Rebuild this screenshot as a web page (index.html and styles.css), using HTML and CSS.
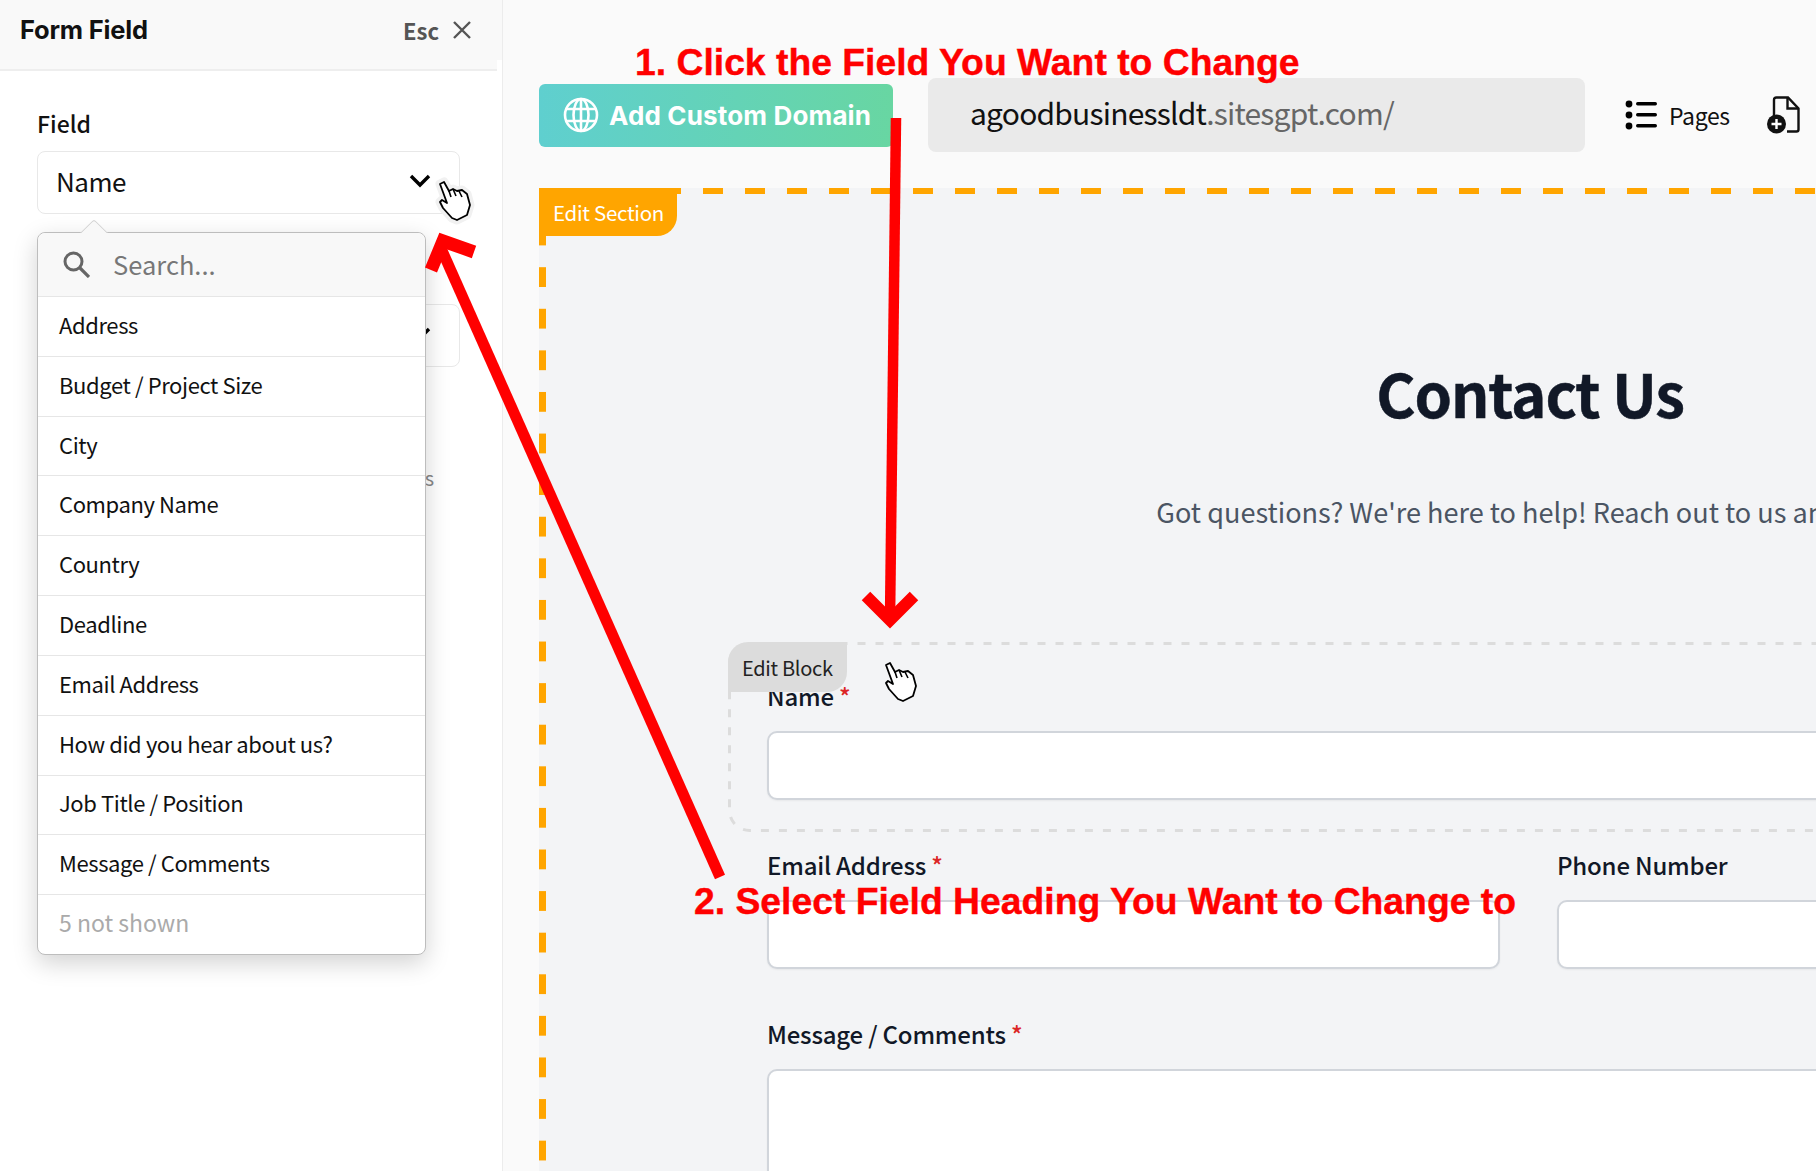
FILE: index.html
```html
<!doctype html>
<html lang="en">
  <head>
    <meta charset="UTF-8" />
    <title>Form Field</title>
    <link rel="stylesheet" href="styles.css">
  </head>
  <body>
    <aside class="c-panel">
      <header class="c-panel__header">
        <h2>Form Field</h2>
        <div class="c-panel__close">
          <span>Esc</span>
          <svg width="20" height="20" viewBox="0 0 20 20"><path d="M2 2 18 18M18 2 2 18" stroke="#555" stroke-width="2.4" fill="none"/></svg>
        </div>
      </header>

      <div class="c-panel__body">
        <label class="c-label">Field</label>
        <div class="c-select">
          <span>Name</span>
          <svg class="c-select__chevron" width="22" height="14" viewBox="0 0 22 14"><path d="M2 2 11 11 20 2" stroke="#000" stroke-width="3.4" fill="none"/></svg>
        </div>
        <div class="c-select c-select--second">
          <svg class="c-select__chevron" width="22" height="14" viewBox="0 0 22 14"><path d="M2 2 11 11 20 2" stroke="#000" stroke-width="3.4" fill="none"/></svg>
        </div>
        <p class="c-hint">Shown to visitors above the form fields</p>
      </div>

      <div class="c-menu">
        <div class="c-menu__search">
          <svg width="28" height="28" viewBox="0 0 28 28"><circle cx="11.5" cy="11.5" r="8.5" stroke="#666" stroke-width="3" fill="none"/><path d="M18 18 27 27" stroke="#666" stroke-width="3.2" fill="none"/></svg>
          <span>Search...</span>
        </div>
        <div class="c-menu__item">Address</div>
        <div class="c-menu__item">Budget / Project Size</div>
        <div class="c-menu__item">City</div>
        <div class="c-menu__item">Company Name</div>
        <div class="c-menu__item">Country</div>
        <div class="c-menu__item">Deadline</div>
        <div class="c-menu__item">Email Address</div>
        <div class="c-menu__item">How did you hear about us?</div>
        <div class="c-menu__item">Job Title / Position</div>
        <div class="c-menu__item">Message / Comments</div>
        <div class="c-menu__item c-menu__item--muted">5 not shown</div>
      </div>
    </aside>

    <main class="c-main">
      <div class="c-topbar">
        <a class="c-domain-btn">
          <svg width="36" height="36" viewBox="0 0 36 36" fill="none" stroke="#fff" stroke-width="2.6">
            <circle cx="18" cy="18" r="16"/>
            <ellipse cx="18" cy="18" rx="7.5" ry="16"/>
            <path d="M4 12H32M4 24H32M18 2V34"/>
          </svg>
          <span>Add Custom Domain</span>
        </a>
        <div class="c-url">agoodbusinessldt<span>.sitesgpt.com/</span></div>
        <div class="c-pages">
          <svg width="32" height="30" viewBox="0 0 32 30" fill="#000">
            <circle cx="4" cy="4" r="3.4"/><circle cx="4" cy="15" r="3.4"/><circle cx="4" cy="26" r="3.4"/>
            <rect x="11" y="2" width="21" height="3.4" rx="1.7"/><rect x="11" y="13" width="21" height="3.4" rx="1.7"/><rect x="11" y="24" width="21" height="3.4" rx="1.7"/>
          </svg>
          <span>Pages</span>
        </div>
        <svg class="c-add-page" width="33" height="38" viewBox="0 0 33 38">
          <path d="M7 20V4Q7 1.500 9.500 1.500H21L31.500 12.500V33.500Q31.500 35.500 29.500 35.500H20" fill="none" stroke="#111" stroke-width="2.4"/>
          <path d="M20.500 2V12.500H31" fill="none" stroke="#111" stroke-width="2.4"/>
          <circle cx="9.500" cy="28" r="9.500" fill="#111"/>
          <path d="M4.500 28H14.500M9.500 23V33" stroke="#fff" stroke-width="2.4"/>
        </svg>
      </div>

      <section class="c-section">
        <div class="c-section__tag">Edit Section</div>
        <h1>Contact Us</h1>
        <p class="c-section__intro">Got questions? We're here to help! Reach out to us anytime.</p>

        <div class="c-block">
          <svg class="c-block__outline" width="100%" height="100%"><rect x="1.500" y="1.500" width="1601" height="187" rx="20" fill="none" stroke="#dcdcdc" stroke-width="3" stroke-dasharray="8 10"/></svg>
          <div class="c-block__tag">Edit Block</div>
          <label class="c-field-label">Name <em>*</em></label>
          <div class="c-input"></div>
        </div>

        <div class="c-form-row">
          <div>
            <label class="c-field-label">Email Address <em>*</em></label>
            <div class="c-input"></div>
          </div>
          <div>
            <label class="c-field-label">Phone Number</label>
            <div class="c-input"></div>
          </div>
        </div>

        <div class="c-form-message">
          <label class="c-field-label">Message / Comments <em>*</em></label>
          <div class="c-input c-input--area"></div>
        </div>
      </section>
    </main>

    <!-- hand cursors and red markup sit on top of the page -->
    <svg class="c-markup" width="1816" height="1171" viewBox="0 0 1816 1171">
      <defs>
        <path id="hand-shape" d="M0 2 4 0 9 9 13 7 17 9 22 8 27 12 30 23 27 33 17 38 12 36 3 26 0 20 2 18 7 21Z"/>
        <g id="hand">
          <use href="#hand-shape" fill="#fff" stroke="#000" stroke-width="1.800" stroke-linejoin="round"/>
          <path d="M9 9 11 15M13 7 16 14M19 9 22 15" stroke="#000" stroke-width="1.600" fill="none"/>
        </g>
      </defs>
      <use href="#hand-shape" x="440" y="182" fill="#f1f1f1" stroke="#f1f1f1" stroke-width="9" stroke-linejoin="round"/>
      <use href="#hand" x="440" y="182"/>
      <use href="#hand" x="886" y="663"/>

      <path d="M896 118 890 620" stroke="#f00" stroke-width="10.500" fill="none"/>
      <path d="M866 596 890 620 914 596" stroke="#f00" stroke-width="12" fill="none"/>

      <path d="M720 877 440 246" stroke="#f00" stroke-width="11" fill="none"/>
      <path d="M431 270 443 241 474 252" stroke="#f00" stroke-width="13" fill="none"/>
    </svg>
    <div class="c-note c-note--one">1. Click the Field You Want to Change</div>
    <div class="c-note c-note--two">2. Select Field Heading You Want to Change to</div>
  </body>
</html>
```

FILE: styles.css
```css
html,
body {
  height: 100%;
}

body {
  margin: 0;
  display: flex;
  width: 1816px;
  height: 1171px;
  overflow: hidden;
  position: relative;
  font-family: "Noto Sans CJK SC", "Noto Sans", sans-serif;
  background: #fff;
}

/* left panel */

.c-panel {
  width: 502px;
  flex: none;
  position: relative;
  background: linear-gradient(#f9f9f9 60px, #fff 60px);
  border-right: 1px solid #ececec;
}

.c-panel__header {
  width: 497px;
  height: 69px;
  display: flex;
  justify-content: space-between;
  align-items: center;
  background: #f9f9f9;
  border-bottom: 2px solid #eee;
}

.c-panel__header h2 {
  margin: 0 0 10px 20px;
  font-family: Inter, sans-serif;
  font-size: 25.500px;
  font-weight: 700;
  letter-spacing: -0.2px;
  color: #111;
}

.c-panel__close {
  display: flex;
  align-items: center;
  gap: 13px;
  margin: 0 25px 10px 0;
  font-size: 22px;
  font-weight: 700;
  color: #555;
}

.c-panel__body {
  padding: 35px 0 0 37px;
}

.c-label {
  display: block;
  margin-bottom: 11px;
  line-height: 34px;
  font-size: 23px;
  font-weight: 500;
  color: #111;
}

.c-select {
  width: 423px;
  height: 63px;
  box-sizing: border-box;
  display: flex;
  align-items: center;
  justify-content: space-between;
  padding: 0 28px 4px 18px;
  border: 1px solid #e8e8e8;
  border-radius: 8px;
  font-size: 26px;
  letter-spacing: -0.5px;
  color: #111;
  position: relative;
}

.c-select__chevron {
  margin-left: auto;
}

.c-select--second {
  margin-top: 90px;
}

.c-hint {
  width: 397px;
  margin: 97px 0 0;
  text-align: right;
  font-size: 20px;
  line-height: 28px;
  color: #888;
}

/* dropdown */

.c-menu {
  position: absolute;
  left: 37px;
  top: 232px;
  width: 389px;
  height: 723px;
  box-sizing: border-box;
  display: flex;
  flex-direction: column;
  background: #fff;
  border: 1px solid #bdbdbd;
  border-radius: 8px;
  box-shadow: 0 8px 24px rgba(0, 0, 0, 0.18);
}

.c-menu::before {
  content: "";
  position: absolute;
  left: 46px;
  top: -10px;
  width: 19px;
  height: 19px;
  background: #f8f8f8;
  border: 1px solid #d0d0d0;
  border-right: 0;
  border-bottom: 0;
  border-top-left-radius: 4px;
  transform: rotate(45deg);
}

.c-menu__search {
  height: 63px;
  flex: none;
  display: flex;
  align-items: center;
  gap: 23px;
  padding: 0 0 2px 24px;
  box-sizing: border-box;
  background: #f8f8f8;
  border-radius: 8px 8px 0 0;
  font-size: 25.500px;
  color: #777;
  position: relative;
}

.c-menu__item {
  flex: 1;
  display: flex;
  align-items: center;
  padding: 0 0 5px 21px;
  border-top: 1px solid #e6e6e6;
  font-size: 22px;
  letter-spacing: -0.4px;
  color: #111;
}

.c-menu__item--muted {
  font-size: 23px;
  letter-spacing: 0;
  color: #aaa;
}

/* main column */

.c-main {
  flex: 1;
  min-width: 0;
  overflow: hidden;
  padding-left: 36px;
  background: #fafafa;
}

.c-topbar {
  height: 146px;
  padding-top: 42px;
  display: flex;
  align-items: center;
}

.c-domain-btn {
  width: 354px;
  height: 63px;
  box-sizing: border-box;
  flex: none;
  display: flex;
  align-items: center;
  gap: 10px;
  padding-left: 24px;
  border-radius: 6px;
  background: linear-gradient(90deg, #5fcfcf, #68d6a2);
  font-family: Inter, sans-serif;
  font-size: 26px;
  font-weight: 700;
  letter-spacing: 0.15px;
  color: #fff;
}

.c-url {
  width: 657px;
  height: 74px;
  box-sizing: border-box;
  flex: none;
  margin-left: 35px;
  padding-left: 42px;
  line-height: 68px;
  border-radius: 8px;
  background: #eaeaea;
  font-size: 30px;
  letter-spacing: -0.8px;
  color: #111;
}

.c-url span {
  color: #666;
}

.c-pages {
  margin-left: 40px;
  display: flex;
  align-items: center;
  gap: 12px;
  font-size: 23px;
  letter-spacing: -0.35px;
  color: #111;
}

.c-add-page {
  margin-left: 37px;
  flex: none;
}

/* page section with the orange outline */

.c-section {
  width: 1982px;
  height: 1100px;
  box-sizing: border-box;
  position: relative;
  padding-top: 154px;
  background-color: #f3f4f6;
  background-image:
    linear-gradient(90deg, #ffa500 20px, transparent 20px),
    linear-gradient(#ffa500 20px, transparent 20px);
  background-size: 42px 6px, 7px 41.600px;
  background-position: 38px 0, 0 37.600px;
  background-repeat: repeat-x, repeat-y;
}

.c-section__tag {
  position: absolute;
  left: 0;
  top: 0;
  width: 138px;
  height: 48px;
  padding-left: 14px;
  box-sizing: border-box;
  line-height: 48px;
  border-bottom-right-radius: 20px;
  background: #ffa500;
  font-size: 20.500px;
  letter-spacing: -0.3px;
  color: #fff;
}

.c-section h1 {
  margin: 0;
  text-align: center;
  line-height: 100px;
  font-size: 60px;
  font-weight: 700;
  letter-spacing: -1.100px;
  -webkit-text-stroke: 0.5px #111827;
  color: #111827;
}

.c-section__intro {
  margin: 50px 0 0;
  text-align: center;
  line-height: 40px;
  font-size: 27.100px;
  color: #4b5563;
}

.c-block {
  position: relative;
  width: 1604px;
  height: 190px;
  box-sizing: border-box;
  margin: 110px 0 0 189px;
  padding: 37px 39px 0;
}

.c-block__outline {
  position: absolute;
  left: 0;
  top: 0;
}

.c-block__tag {
  position: absolute;
  left: 0;
  top: 0;
  width: 119px;
  height: 50px;
  box-sizing: border-box;
  padding-left: 14px;
  line-height: 52px;
  border-radius: 20px 0 20px 0;
  background: #dcdcdc;
  font-size: 20px;
  letter-spacing: -0.3px;
  color: #222;
  z-index: 1;
}

.c-field-label {
  display: block;
  height: 34px;
  line-height: 34px;
  margin-bottom: 18px;
  font-size: 24px;
  font-weight: 500;
  letter-spacing: -0.2px;
  color: #111827;
}

.c-field-label em {
  font-style: normal;
  color: #dc2626;
}

.c-input {
  height: 69px;
  box-sizing: border-box;
  background: #fff;
  border: 2px solid #d1d5db;
  border-radius: 10px;
  box-shadow: 0 1px 2px rgba(0, 0, 0, 0.05);
}

.c-input--area {
  height: 160px;
}

.c-form-row {
  width: 1526px;
  margin: 16px 0 0 228px;
  display: grid;
  grid-template-columns: 733px 1fr;
  gap: 57px;
}

.c-form-message {
  width: 1526px;
  margin: 48px 0 0 228px;
}

/* red markup */

.c-markup {
  position: absolute;
  left: 0;
  top: 0;
  pointer-events: none;
}

.c-note {
  position: absolute;
  white-space: nowrap;
  font-family: "Liberation Sans", Arial, sans-serif;
  font-weight: 700;
  font-size: 37.300px;
  line-height: 44px;
  -webkit-text-stroke: 0.4px #f00;
  color: #f00;
}

.c-note--one {
  left: 635px;
  top: 40px;
}

.c-note--two {
  left: 694px;
  top: 879px;
}
```
